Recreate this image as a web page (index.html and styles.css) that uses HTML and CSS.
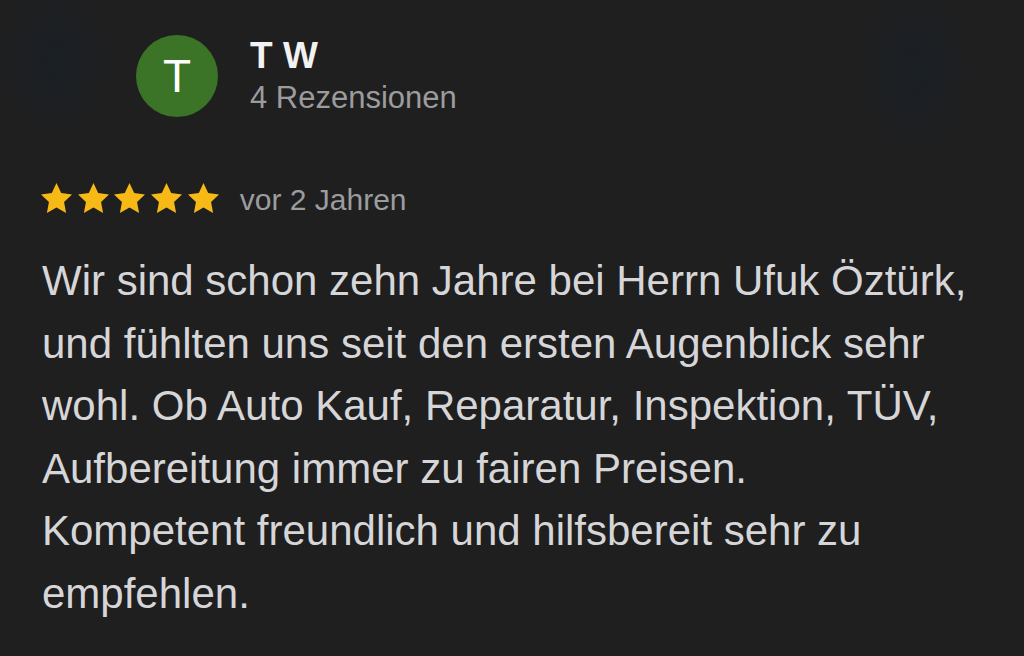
FILE: index.html
```html
<!DOCTYPE html>
<html lang="de">
<head>
<meta charset="utf-8">
<title>Rezension</title>
<link rel="stylesheet" href="styles.css">
</head>
<body>
<article class="review">
  <header class="author">
    <div class="avatar">T</div>
    <div class="author-info">
      <div class="author-name">T W</div>
      <div class="author-count">4 Rezensionen</div>
    </div>
  </header>
  <div class="meta">
    <div class="stars" aria-label="5 Sterne">
      <svg class="star" viewBox="1.75 1.6 20.5 19.42" preserveAspectRatio="none"><path d="M12 1.6l3.1 6.55 7.15.86-5.26 4.93 1.37 7.08L12 17.5l-6.36 3.52 1.37-7.08L1.75 9.01l7.15-.86z"/></svg>
      <svg class="star" viewBox="1.75 1.6 20.5 19.42" preserveAspectRatio="none"><path d="M12 1.6l3.1 6.55 7.15.86-5.26 4.93 1.37 7.08L12 17.5l-6.36 3.52 1.37-7.08L1.75 9.01l7.15-.86z"/></svg>
      <svg class="star" viewBox="1.75 1.6 20.5 19.42" preserveAspectRatio="none"><path d="M12 1.6l3.1 6.55 7.15.86-5.26 4.93 1.37 7.08L12 17.5l-6.36 3.52 1.37-7.08L1.75 9.01l7.15-.86z"/></svg>
      <svg class="star" viewBox="1.75 1.6 20.5 19.42" preserveAspectRatio="none"><path d="M12 1.6l3.1 6.55 7.15.86-5.26 4.93 1.37 7.08L12 17.5l-6.36 3.52 1.37-7.08L1.75 9.01l7.15-.86z"/></svg>
      <svg class="star" viewBox="1.75 1.6 20.5 19.42" preserveAspectRatio="none"><path d="M12 1.6l3.1 6.55 7.15.86-5.26 4.93 1.37 7.08L12 17.5l-6.36 3.52 1.37-7.08L1.75 9.01l7.15-.86z"/></svg>
    </div>
    <span class="date">vor 2 Jahren</span>
  </div>
  <p class="text">Wir sind schon zehn Jahre bei Herrn Ufuk Öztürk, und fühlten uns seit den ersten Augenblick sehr wohl. Ob Auto Kauf, Reparatur, Inspektion, TÜV, Aufbereitung immer zu fairen Preisen.<br>Kompetent freundlich und hilfsbereit sehr zu empfehlen.</p>
</article>
</body>
</html>
```
FILE: styles.css
```css
html, body {
  margin: 0;
  padding: 0;
}

body {
  width: 1024px;
  height: 656px;
  overflow: hidden;
  background-color: #1f1f20;
  background-image:
    radial-gradient(ellipse 55px 75px at 55px 60px, rgba(22, 32, 42, 0.55), rgba(22, 32, 42, 0) 100%),
    radial-gradient(ellipse 55px 85px at 915px 70px, rgba(22, 32, 42, 0.55), rgba(22, 32, 42, 0) 100%);
  font-family: "Liberation Sans", Arial, Helvetica, sans-serif;
  color: #d6d6d8;
}

.review {
  padding: 35px 40px 0 41px;
}

.author {
  display: flex;
  align-items: flex-start;
  gap: 32px;
  padding-left: 95px;
}

.avatar {
  width: 82px;
  height: 82px;
  border-radius: 50%;
  background: #3b7426;
  color: #ffffff;
  font-size: 46px;
  line-height: 82px;
  text-align: center;
  flex: none;
}

.author-info {
  margin-top: 1px;
}

.author-name {
  font-size: 37px;
  line-height: 40px;
  font-weight: 700;
  color: #f2f2f2;
}

.author-count {
  margin-top: 5px;
  font-size: 31px;
  line-height: 34px;
  color: #9c9c9e;
}

.meta {
  display: flex;
  align-items: center;
  height: 36px;
  margin-top: 63px;
  gap: 21px;
}

.stars {
  display: flex;
  gap: 5.7px;
}

.star {
  width: 31px;
  height: 30px;
  fill: #f7b915;
  display: block;
}

.date {
  padding-top: 4px;
  font-size: 30px;
  line-height: 36px;
  color: #9c9c9e;
}

.text {
  margin: 34px 0 0 1px;
  font-size: 42px;
  line-height: 62.6px;
  color: #d6d6d8;
}
```
